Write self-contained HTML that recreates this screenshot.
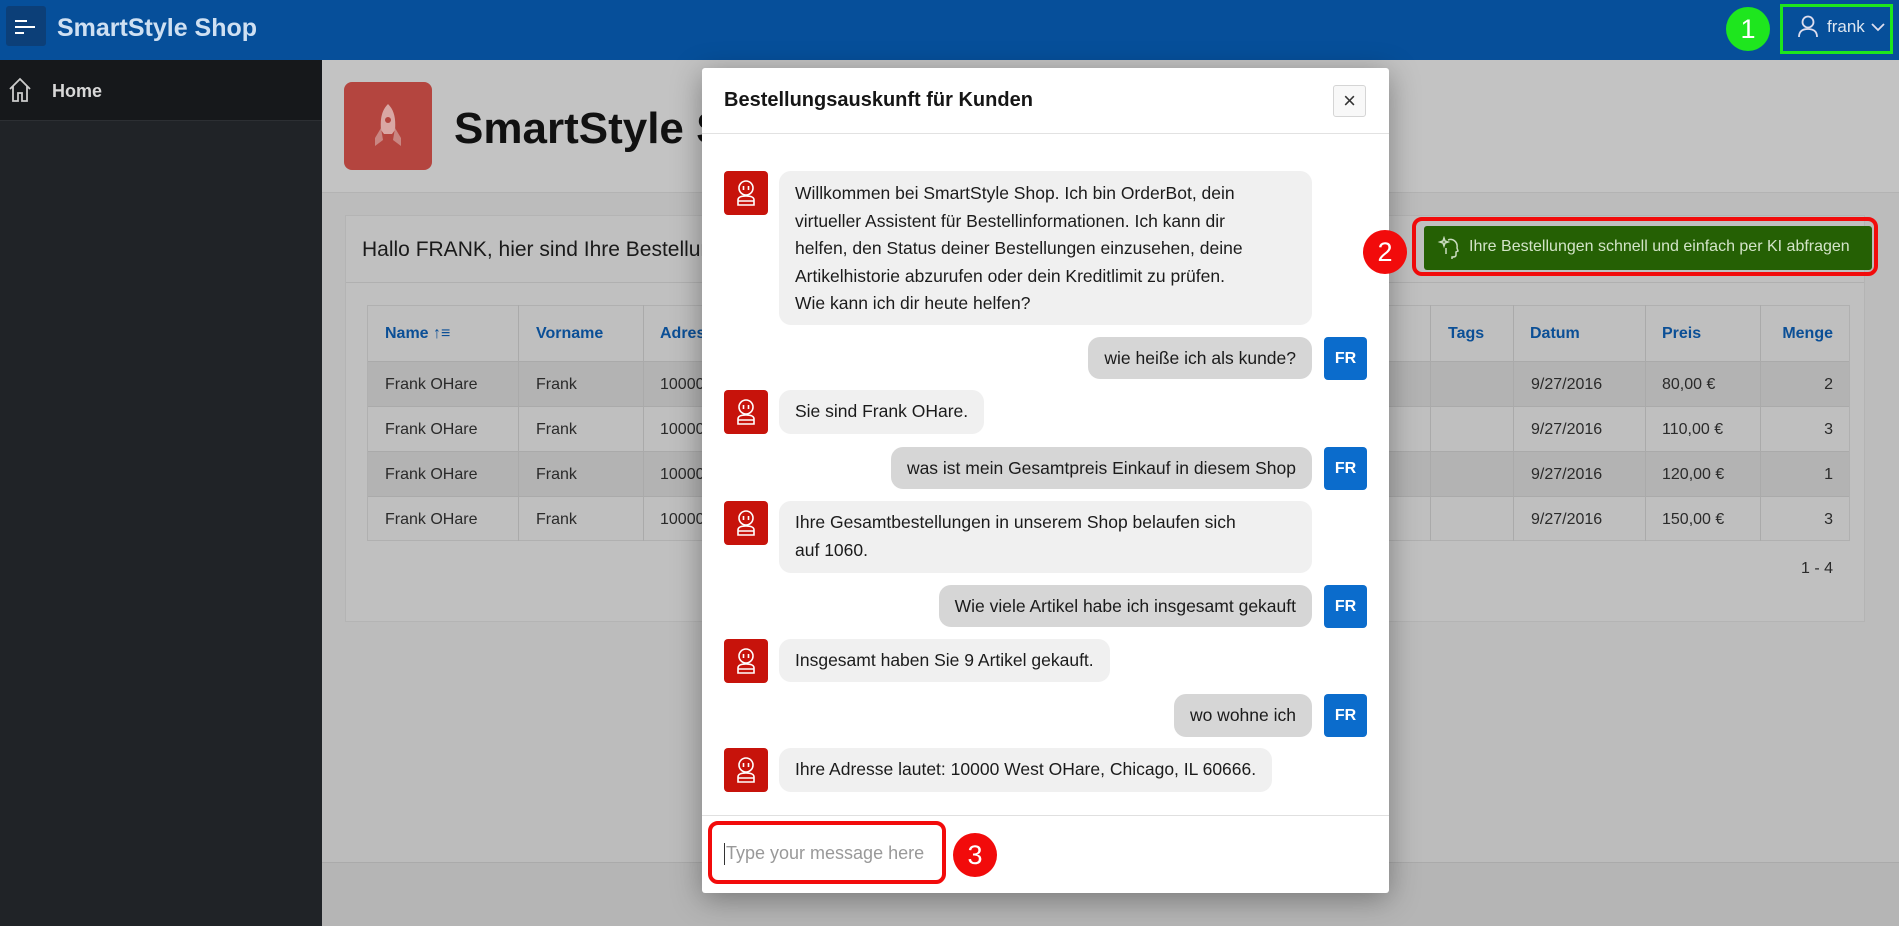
<!DOCTYPE html>
<html><head><meta charset="utf-8"><style>
*{box-sizing:border-box;margin:0;padding:0}
body{width:1899px;height:926px;overflow:hidden;position:relative;background:#bcbcbc;font-family:"Liberation Sans",sans-serif;color:#1e1e1e}
.a{position:absolute}
.hdr{left:0;top:0;width:1899px;height:60px;background:#064f9a}
.side{left:0;top:60px;width:322px;height:866px;background:#202327}
.home{left:0;top:60px;width:322px;height:61px;background:#16181b;border-bottom:1px solid #2c2f33}
.band{left:322px;top:60px;width:1577px;height:133px;background:#c3c3c3;border-bottom:1px solid #b3b3b3}
.card{left:345px;top:215px;width:1520px;height:407px;background:#c0c0c0;border:1px solid #b4b4b4}
.th{color:#0b4f96;font-weight:bold;font-size:16px}
.td{font-size:16px;color:#2a2a2a}
.dlg{left:702px;top:68px;width:687px;height:825px;background:#fff;border-radius:3px;box-shadow:0 6px 30px rgba(0,0,0,.35)}
.bot{width:44px;height:44px;background:#c7130b;border-radius:4px}
.bot svg{position:absolute;left:10px;top:8px}
.bub{background:#f0f0f0;border-radius:12px;font-size:17.5px;line-height:28px;padding:7px 16px;color:#1b1b1b;white-space:nowrap}
.ub{background:#d6d6d6}
.fr{width:43px;height:43px;background:#0b6ccc;border-radius:4px;color:#fff;font-weight:bold;font-size:16px;text-align:center;line-height:43px}
.circ{width:44px;height:44px;border-radius:50%;color:#fff;font-size:27px;text-align:center;line-height:44px}
</style></head><body>
<div class="a hdr"></div>
<div class="a" style="left:6px;top:6px;width:40px;height:40px;background:#0c3f78;border-radius:3px"></div>
<div class="a" style="left:15px;top:20px;width:12px;height:2px;background:#fff"></div>
<div class="a" style="left:15px;top:26px;width:20px;height:2px;background:#fff"></div>
<div class="a" style="left:15px;top:32px;width:9px;height:2px;background:#fff"></div>
<div class="a" style="left:57px;top:14px;font-size:25px;font-weight:bold;color:#cfe0f2">SmartStyle Shop</div>
<div class="a circ" style="left:1726px;top:7px;background:#1ee61e">1</div>
<div class="a" style="left:1780px;top:4px;width:113px;height:50px;border:3px solid #1ee61e"></div>
<svg class="a" style="left:1797px;top:14px" width="22" height="24" viewBox="0 0 22 24" fill="none" stroke="#dde" stroke-width="1.8"><circle cx="11" cy="8" r="5.5"/><path d="M2 23c0-6 4-8 9-8s9 2 9 8"/></svg>
<div class="a" style="left:1827px;top:17px;font-size:17px;color:#dde6f0">frank</div>
<svg class="a" style="left:1871px;top:22px" width="14" height="10" viewBox="0 0 14 10" fill="none" stroke="#dde" stroke-width="1.8"><path d="M1 2l6 6 6-6"/></svg>

<div class="a side"></div>
<div class="a home"></div>
<svg class="a" style="left:8px;top:77px" width="24" height="26" viewBox="0 0 24 26" fill="none" stroke="#ccc" stroke-width="1.8"><path d="M2 12L12 2l10 10M5 9v15h5v-8h4v8h5V9"/></svg>
<div class="a" style="left:52px;top:81px;font-size:18px;font-weight:bold;color:#d8d8d8">Home</div>

<div class="a band"></div>
<div class="a" style="left:344px;top:82px;width:88px;height:88px;background:#b4453f;border-radius:8px"></div>
<svg class="a" style="left:368px;top:102px" width="40" height="48" viewBox="0 0 40 48"><path d="M20 2c6 6 8 14 7 26l-3 4h-8l-3-4C12 16 14 8 20 2z" fill="#d9a7a4"/><path d="M13 26l-6 10 0 8 8-6zM27 26l6 10 0 8-8-6z" fill="#c98682"/><circle cx="20" cy="18" r="3" fill="#b4453f"/></svg>
<div class="a" style="left:454px;top:104px;font-size:44px;font-weight:bold;color:#111">SmartStyle Shop</div>

<div class="a card"></div>
<div class="a" style="left:346px;top:282px;width:1518px;height:1px;background:#b0b0b0"></div>
<div class="a" style="left:362px;top:238px;font-size:21px;color:#1a1a1a">Hallo FRANK, hier sind Ihre Bestellungen</div>
<div class="a" style="left:1412px;top:217px;width:466px;height:59px;border:4px solid #f20b0b;border-radius:10px"></div>
<div class="a" style="left:1424px;top:226px;width:448px;height:44px;background:#256004;border-radius:3px"></div>
<svg class="a" style="left:1437px;top:236px" width="24" height="24" viewBox="0 0 24 24" fill="none" stroke="#c9dcbf" stroke-width="1.5"><path d="M7 2l1 3 3 1-3 1-1 3-1-3-3-1 3-1z"/><path d="M11 4c5-2 10 2 9 8l1 3-2 1v3c0 2-2 2-4 2v2M9 12v6"/></svg>
<div class="a" style="left:1469px;top:238px;font-size:16px;color:#d3e4c8">Ihre Bestellungen schnell und einfach per KI abfragen</div>

<div class="a" style="left:367px;top:305px;width:1483px;height:236px;border:1px solid #b0b0b0;background:#bfbfbf"></div>
<div class="a" style="left:368px;top:361px;width:1481px;height:45px;background:#b3b3b3"></div>
<div class="a" style="left:368px;top:451px;width:1481px;height:45px;background:#b3b3b3"></div>
<div class="a" style="left:368px;top:361px;width:1481px;height:1px;background:#aaa"></div>
<div class="a" style="left:368px;top:406px;width:1481px;height:1px;background:#aaa"></div>
<div class="a" style="left:368px;top:451px;width:1481px;height:1px;background:#aaa"></div>
<div class="a" style="left:368px;top:496px;width:1481px;height:1px;background:#aaa"></div>
<div class="a" style="left:518px;top:305px;width:1px;height:236px;background:#aaa"></div>
<div class="a" style="left:643px;top:305px;width:1px;height:236px;background:#aaa"></div>
<div class="a" style="left:1430px;top:305px;width:1px;height:236px;background:#aaa"></div>
<div class="a" style="left:1513px;top:305px;width:1px;height:236px;background:#aaa"></div>
<div class="a" style="left:1645px;top:305px;width:1px;height:236px;background:#aaa"></div>
<div class="a" style="left:1760px;top:305px;width:1px;height:236px;background:#aaa"></div>
<div class="a th" style="left:385px;top:325px">Name ↑≡</div>
<div class="a th" style="left:536px;top:325px">Vorname</div>
<div class="a th" style="left:660px;top:325px">Adresse</div>
<div class="a th" style="left:1448px;top:325px">Tags</div>
<div class="a th" style="left:1530px;top:325px">Datum</div>
<div class="a th" style="left:1662px;top:325px">Preis</div>
<div class="a th" style="left:1761px;width:89px;padding-right:17px;text-align:right;top:325px">Menge</div>
<div class="a td" style="left:385px;top:362px;line-height:45px">Frank OHare<br>Frank OHare<br>Frank OHare<br>Frank OHare</div>
<div class="a td" style="left:536px;top:362px;line-height:45px">Frank<br>Frank<br>Frank<br>Frank</div>
<div class="a td" style="left:660px;top:362px;line-height:45px">10000<br>10000<br>10000<br>10000</div>
<div class="a td" style="left:1531px;top:362px;line-height:45px">9/27/2016<br>9/27/2016<br>9/27/2016<br>9/27/2016</div>
<div class="a td" style="left:1662px;top:362px;line-height:45px">80,00 €<br>110,00 €<br>120,00 €<br>150,00 €</div>
<div class="a td" style="left:1800px;width:50px;padding-right:17px;text-align:right;top:362px;line-height:45px">2<br>3<br>1<br>3</div>
<div class="a td" style="left:1780px;width:70px;padding-right:17px;text-align:right;top:560px">1 - 4</div>
<div class="a" style="left:322px;top:862px;width:1577px;height:64px;background:#b5b5b5;border-top:1px solid #aaa"></div>

<div class="a dlg"></div>
<div class="a" style="left:702px;top:133px;width:687px;height:1px;background:#e2e2e2"></div>
<div class="a" style="left:724px;top:89px;font-size:20px;font-weight:bold;color:#161616">Bestellungsauskunft für Kunden</div>
<div class="a" style="left:1333px;top:85px;width:33px;height:32px;border:1px solid #d5d5d5;border-radius:3px;background:#f8f8f8;text-align:center;line-height:30px;font-size:22px;color:#333">×</div>

<div class="a bot" style="left:724px;top:171px"><svg width="24" height="28" viewBox="0 0 24 28" fill="none" stroke="#fff" stroke-width="1.6"><circle cx="12" cy="9" r="7"/><path d="M9.5 7v4M14.5 7v4M4 26v-5c0-3 3-4 8-4s8 1 8 4v5zM4 22h16"/></svg></div>
<div class="a bub" style="left:779px;top:171px;width:533px;height:154px;padding:9px 16px;line-height:27.5px">Willkommen bei SmartStyle Shop. Ich bin OrderBot, dein<br>virtueller Assistent für Bestellinformationen. Ich kann dir<br>helfen, den Status deiner Bestellungen einzusehen, deine<br>Artikelhistorie abzurufen oder dein Kreditlimit zu prüfen.<br>Wie kann ich dir heute helfen?</div>
<div class="a bub ub" style="right:587px;top:337px;height:42px">wie heiße ich als kunde?</div>
<div class="a fr" style="left:1324px;top:337px">FR</div>
<div class="a bot" style="left:724px;top:390px"><svg width="24" height="28" viewBox="0 0 24 28" fill="none" stroke="#fff" stroke-width="1.6"><circle cx="12" cy="9" r="7"/><path d="M9.5 7v4M14.5 7v4M4 26v-5c0-3 3-4 8-4s8 1 8 4v5zM4 22h16"/></svg></div>
<div class="a bub" style="left:779px;top:390px;height:44px">Sie sind Frank OHare.</div>
<div class="a bub ub" style="right:587px;top:447px;height:42px">was ist mein Gesamtpreis Einkauf in diesem Shop</div>
<div class="a fr" style="left:1324px;top:447px">FR</div>
<div class="a bot" style="left:724px;top:501px"><svg width="24" height="28" viewBox="0 0 24 28" fill="none" stroke="#fff" stroke-width="1.6"><circle cx="12" cy="9" r="7"/><path d="M9.5 7v4M14.5 7v4M4 26v-5c0-3 3-4 8-4s8 1 8 4v5zM4 22h16"/></svg></div>
<div class="a bub" style="left:779px;top:501px;width:533px;height:72px">Ihre Gesamtbestellungen in unserem Shop belaufen sich<br>auf 1060.</div>
<div class="a bub ub" style="right:587px;top:585px;height:42px">Wie viele Artikel habe ich insgesamt gekauft</div>
<div class="a fr" style="left:1324px;top:585px">FR</div>
<div class="a bot" style="left:724px;top:639px"><svg width="24" height="28" viewBox="0 0 24 28" fill="none" stroke="#fff" stroke-width="1.6"><circle cx="12" cy="9" r="7"/><path d="M9.5 7v4M14.5 7v4M4 26v-5c0-3 3-4 8-4s8 1 8 4v5zM4 22h16"/></svg></div>
<div class="a bub" style="left:779px;top:639px;height:43px">Insgesamt haben Sie 9 Artikel gekauft.</div>
<div class="a bub ub" style="right:587px;top:694px;height:43px">wo wohne ich</div>
<div class="a fr" style="left:1324px;top:694px">FR</div>
<div class="a bot" style="left:724px;top:748px"><svg width="24" height="28" viewBox="0 0 24 28" fill="none" stroke="#fff" stroke-width="1.6"><circle cx="12" cy="9" r="7"/><path d="M9.5 7v4M14.5 7v4M4 26v-5c0-3 3-4 8-4s8 1 8 4v5zM4 22h16"/></svg></div>
<div class="a bub" style="left:779px;top:748px;height:44px">Ihre Adresse lautet: 10000 West OHare, Chicago, IL 60666.</div>

<div class="a" style="left:702px;top:815px;width:687px;height:1px;background:#e0e0e0"></div>
<div class="a" style="left:708px;top:821px;width:238px;height:63px;border:4px solid #f20b0b;border-radius:10px"></div>
<div class="a" style="left:724px;top:843px;width:1px;height:22px;background:#333"></div>
<div class="a" style="left:726px;top:843px;font-size:18px;color:#999">Type your message here</div>
<div class="a circ" style="left:953px;top:833px;background:#f20b0b">3</div>
<div class="a circ" style="left:1363px;top:230px;background:#f20b0b">2</div>
</body></html>
